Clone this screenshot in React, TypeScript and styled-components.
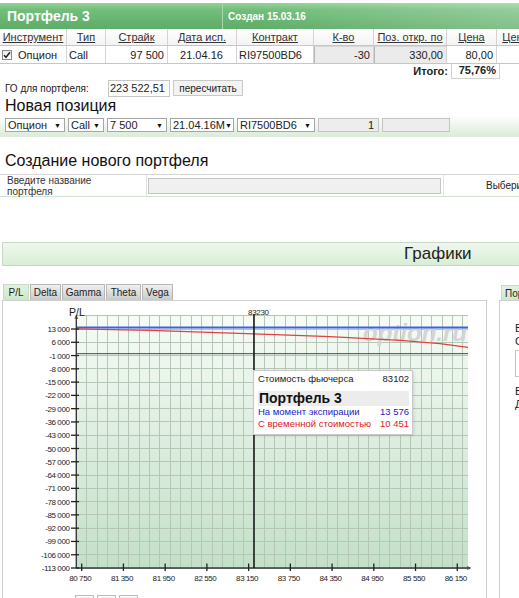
import React from "react";
import styled, { createGlobalStyle } from "styled-components";

const FONT = `"Liberation Sans", Arial, sans-serif`;

const GlobalStyle = createGlobalStyle`
  html, body { margin: 0; padding: 0; background: #fff; }
  body { font-family: ${FONT}; color: #222; width: 519px; height: 598px; overflow: hidden; }
  * { box-sizing: border-box; }
`;

const Page = styled.div`
  width: 560px;
  padding-top: 3px;
`;

/* ---------- header ---------- */
const Header = styled.div`
  display: flex;
  height: 26px;
  background: linear-gradient(to right, rgba(255, 255, 255, 0) 45%, rgba(255, 255, 255, 0.28) 100%),
    linear-gradient(to bottom, #95d399 0%, #72be7a 25%, #5eac67 100%);
`;
const HeaderTitle = styled.div`
  width: 223px;
  padding-left: 7px;
  display: flex;
  align-items: center;
  font-size: 14px;
  font-weight: bold;
  color: #fff;
  border-right: 1px solid #a8d8aa;
`;
const HeaderDate = styled.div`
  padding-left: 5px;
  display: flex;
  align-items: center;
  font-size: 10px;
  font-weight: bold;
  color: #fff;
`;

/* ---------- positions table ---------- */
const COLS = "67px 39px 62px 69px 77px 60px 73px 50px 60px";

const HeadRow = styled.div`
  display: grid;
  grid-template-columns: ${COLS};
  height: 17px;
  border-bottom: 1px solid #c6c6c6;
  background: linear-gradient(#ffffff, #f3f3f3);
`;
const HeadCell = styled.div`
  font-size: 11px;
  line-height: 16px;
  text-align: center;
  text-decoration: underline;
  color: #333;
  border-right: 1px solid #d4d4d4;
  white-space: nowrap;
  overflow: hidden;
`;
const DataRow = styled.div`
  display: grid;
  grid-template-columns: ${COLS};
  height: 18px;
  border-bottom: 1px solid #c6c6c6;
`;
const DataCell = styled.div<{ $align?: string; $shaded?: boolean }>`
  display: flex;
  align-items: center;
  justify-content: ${(p) => (p.$align === "right" ? "flex-end" : p.$align === "center" ? "center" : "flex-start")};
  gap: 6px;
  font-size: 11px;
  padding: 0 3px 0 2px;
  color: #222;
  white-space: nowrap;
  overflow: hidden;
  border-right: 1px solid #d4d4d4;
  background: ${(p) => (p.$shaded ? "#ebebeb" : "transparent")};
  ${(p) => (p.$shaded ? "border-left: 1px solid #b5b5b5; border-top: 1px solid #d8d8d8;" : "")}
`;
const CheckBox = styled.span`
  width: 10px;
  height: 10px;
  border: 1px solid #8a8a8a;
  background: linear-gradient(#e9e9e9, #fff);
  display: inline-flex;
  align-items: center;
  justify-content: center;
`;
const TotalRow = styled.div`
  display: grid;
  grid-template-columns: 449px 51px;
  height: 15px;
`;
const TotalLabel = styled.div`
  text-align: right;
  font-size: 11px;
  font-weight: bold;
  line-height: 14px;
  padding-right: 1px;
`;
const TotalValue = styled.div`
  margin-left: 2px;
  border: 1px solid #d0d0d0;
  border-top: none;
  font-size: 11px;
  font-weight: bold;
  text-align: right;
  line-height: 13px;
  padding-right: 3px;
`;

/* ---------- margin row ---------- */
const GoRow = styled.div`
  display: flex;
  align-items: center;
  height: 18px;
  padding-left: 5px;
`;
const GoLabel = styled.span`
  width: 103px;
  font-size: 10px;
  color: #222;
`;
const GoInput = styled.div`
  width: 62px;
  height: 17px;
  border: 1px solid #c6c6c6;
  font-size: 11px;
  line-height: 15px;
  text-align: right;
  padding-right: 4px;
`;
const Button = styled.button`
  margin-left: 3px;
  width: 70px;
  height: 16px;
  padding: 0;
  border: 1px solid #c9c9c9;
  background: #f3f3f3;
  font-family: ${FONT};
  font-size: 10px;
  color: #222;
`;

const SectionTitle = styled.h2<{ $mt: number }>`
  margin: ${(p) => p.$mt}px 0 0 5px;
  height: 18px;
  font-size: 16px;
  line-height: 18px;
  font-weight: normal;
  color: #111;
  white-space: nowrap;
`;

/* ---------- new position band ---------- */
const SelectBand = styled.div`
  display: flex;
  gap: 3px;
  height: 22px;
  padding: 3px 0 0 5px;
  background: linear-gradient(#ffffff 0%, #f1f7f0 40%, #dbebd8 100%);
`;
const FakeSelect = styled.div<{ $w: number }>`
  width: ${(p) => p.$w}px;
  height: 14px;
  border: 1px solid #a6a6a6;
  background: #fff;
  display: flex;
  align-items: center;
  justify-content: space-between;
  padding: 0 3px 0 2px;
  font-size: 11px;
  white-space: nowrap;
  overflow: hidden;
`;
const Arrow = styled.span`
  font-size: 7px;
  color: #111;
`;
const FakeField = styled.div<{ $w: number }>`
  width: ${(p) => p.$w}px;
  height: 14px;
  border: 1px solid #c4c4c4;
  background: #ededed;
  font-size: 11px;
  line-height: 12px;
  text-align: right;
  padding-right: 4px;
`;

/* ---------- create portfolio ---------- */
const CreateRow = styled.div`
  display: flex;
  height: 23px;
  margin-top: 4px;
  border-top: 1px solid #d6d6d6;
  border-bottom: 1px solid #d2e4cf;
`;
const CreateLabel = styled.div`
  width: 147px;
  padding: 1px 0 0 7px;
  font-size: 10px;
  line-height: 10.5px;
  color: #333;
  border-right: 1px solid #e2e2e2;
`;
const CreateInput = styled.div`
  width: 293px;
  height: 16px;
  margin: 3px 2px 0 1px;
  background: #f0f0f0;
  border: 1px solid #c6c6c6;
`;
const CreateAction = styled.div`
  flex: 1;
  padding: 5px 0 0 42px;
  font-size: 10px;
  color: #222;
  white-space: nowrap;
  border-left: 1px solid #e2e2e2;
`;

/* ---------- charts ---------- */
const ChartsBar = styled.div`
  margin: 45px 0 0 2px;
  height: 24px;
  border: 1px solid #c7d8c5;
  background: linear-gradient(#eff8ee, #d8edd5);
  font-size: 17px;
  line-height: 22px;
  padding-left: 401px;
  color: #222;
`;
const ChartsArea = styled.div`
  display: flex;
  margin-top: 18px;
`;
const LeftCol = styled.div`
  width: 485px;
  margin-left: 2px;
`;
const TabRow = styled.div`
  display: flex;
  gap: 1px;
  height: 16px;
  margin-left: 1px;
`;
const Tab = styled.div<{ $w: number; $active?: boolean }>`
  width: ${(p) => p.$w}px;
  font-size: 10px;
  line-height: 15px;
  text-align: center;
  color: #222;
  border: 1px solid ${(p) => (p.$active ? "#c5dcc3" : "#b7b7b7")};
  border-bottom: none;
  background: ${(p) => (p.$active ? "linear-gradient(#e3f2e1, #cde7ca)" : "linear-gradient(#f1f1f1, #c9c9c9)")};
`;
const ChartBox = styled.div`
  position: relative;
  height: 310px;
  border: 1px solid #cfcfcf;
`;
const ChartSvg = styled.svg`
  display: block;
`;
const MiniButtons = styled.div`
  display: flex;
  gap: 3px;
  margin: 5px 0 0 72px;
`;
const MiniButton = styled.div`
  width: 19px;
  height: 14px;
  border: 1px solid #bcbcbc;
  background: linear-gradient(#fafafa, #e4e4e4);
`;

const Tooltip = styled.div`
  position: absolute;
  left: 250px;
  top: 69px;
  width: 160px;
  height: 65px;
  padding: 1px 3px 0 4px;
  background: rgba(255, 255, 255, 0.96);
  border: 1px solid #cacaca;
  box-shadow: 1px 1px 3px rgba(0, 0, 0, 0.12);
  font-size: 9.5px;
`;
const TipRow = styled.div<{ $color?: string; $h?: number }>`
  display: flex;
  justify-content: space-between;
  line-height: ${(p) => p.$h ?? 12}px;
  color: ${(p) => p.$color ?? "#222"};
  white-space: nowrap;
`;
const TipTitle = styled.div`
  margin-top: 5px;
  height: 15px;
  padding-left: 1px;
  background: #ececec;
  font-size: 14px;
  line-height: 15px;
  font-weight: bold;
  color: #111;
`;

const RightCol = styled.div`
  flex: 1;
  margin-left: 12px;
  white-space: nowrap;
`;
const RightTab = styled.div`
  margin: 1px 0 0 2px;
  height: 15px;
  width: 60px;
  padding-left: 3px;
  font-size: 10px;
  line-height: 15px;
  border: 1px solid #c5dcc3;
  border-bottom: none;
  background: linear-gradient(#e3f2e1, #cde7ca);
`;
const RightBox = styled.div`
  height: 320px;
  border: 1px solid #cfcfcf;
  padding: 21px 0 0 15px;
  font-size: 11px;
`;
const RightLine = styled.div<{ $mt?: number }>`
  line-height: 13px;
  margin-top: ${(p) => p.$mt ?? 0}px;
`;
const RightInput = styled.div`
  margin-top: 2px;
  height: 27px;
  border: 1px solid #c6c6c6;
`;

/* ---------- chart data ---------- */
const yOf = (v: number) => 329 + ((13000 - v) / 7000) * 13.278;
const yTicks = Array.from({ length: 19 }, (_, i) => 13000 - i * 7000);
const fmt = (v: number) => {
  const s = Math.abs(v).toString().replace(/\B(?=(\d{3})+(?!\d))/g, " ");
  return (v < 0 ? "-" : "") + s;
};
const xLabels = ["80 750", "81 350", "81 950", "82 550", "83 150", "83 750", "84 350", "84 950", "85 550", "86 150"];
const xOf = (i: number) => 81.7 + i * 41.73;
const vGrid: number[] = [];
for (let x = 76.3 + 10.45; x < 468; x += 10.45) vGrid.push(x);

const PLOT_L = 76.3;
const PLOT_R = 468;
const PLOT_T = 315.7;
const PLOT_B = 568;

function Chart() {
  return (
    <ChartSvg width={483} height={289} viewBox="0 0 483 289">
      <defs>
        <linearGradient id="plotBg" x1="0" y1="0" x2="0" y2="1">
          <stop offset="0%" stopColor="#f6fbf6" />
          <stop offset="100%" stopColor="#c3e0c8" />
        </linearGradient>
      </defs>
      <g transform="translate(-3 -301)" fontFamily={FONT}>
        <rect x={PLOT_L} y={PLOT_T} width={PLOT_R - PLOT_L} height={PLOT_B - PLOT_T} fill="url(#plotBg)" />
        <g stroke="#b6c6b6" strokeWidth={1} shapeRendering="crispEdges">
          <line x1={PLOT_L} x2={PLOT_R} y1={PLOT_T} y2={PLOT_T} />
          {yTicks.map((v) => (
            <line key={v} x1={PLOT_L} x2={PLOT_R} y1={yOf(v)} y2={yOf(v)} />
          ))}
          {vGrid.map((x) => (
            <line key={x} x1={x} x2={x} y1={PLOT_T} y2={PLOT_B} />
          ))}
        </g>
        <text x={363} y={341} fontSize={24} fontWeight="bold" fontStyle="italic" fill="#d4d4d4">
          option.ru
        </text>
        <line x1={PLOT_L} x2={PLOT_R} y1={yOf(0)} y2={yOf(0)} stroke="#4a4a4a" strokeWidth={1} />
        <line x1={PLOT_L} x2={PLOT_R} y1={327.6} y2={327.6} stroke="#3d62e4" strokeWidth={2} />
        <polyline
          points="76,328.8 150,330.4 254,333.8 330,336.6 400,340.4 440,343.6 468,347.4"
          fill="none"
          stroke="#e2403f"
          strokeWidth={1.3}
        />
        {/* axes */}
        <line x1={PLOT_L} x2={PLOT_L} y1={PLOT_T} y2={PLOT_B} stroke="#3a3a3a" strokeWidth={1.4} />
        <line x1={PLOT_L} x2={PLOT_R + 2} y1={PLOT_B} y2={PLOT_B} stroke="#3a3a3a" strokeWidth={1.4} />
        <path d="M74.8 319 L76.3 315.5 L77.8 319" fill="none" stroke="#3a3a3a" strokeWidth={0.8} />
        <path d="M467 566.5 L470.5 568 L467 569.5" fill="none" stroke="#3a3a3a" strokeWidth={0.8} />
        <text x={69} y={315.5} fontSize={10.5} fill="#222">
          P/L
        </text>
        {yTicks.map((v) => (
          <g key={v}>
            <line x1={71} x2={79} y1={yOf(v)} y2={yOf(v)} stroke="#222" strokeWidth={1.3} />
            <text x={69.5} y={yOf(v) + 3} fontSize={8} letterSpacing={-0.4} textAnchor="end" fill="#222">
              {fmt(v)}
            </text>
          </g>
        ))}
        {xLabels.map((l, i) => (
          <g key={l}>
            <line x1={xOf(i)} x2={xOf(i)} y1={563.5} y2={571} stroke="#222" strokeWidth={1.3} />
            <text x={xOf(i) - 1.5} y={581} fontSize={8} letterSpacing={-0.4} textAnchor="middle" fill="#222">
              {l}
            </text>
          </g>
        ))}
        {/* cursor */}
        <line x1={254} x2={254} y1={314} y2={PLOT_B} stroke="#111" strokeWidth={1.5} />
        <text x={248} y={315} fontSize={8} letterSpacing={-0.3} fill="#222">
          83230
        </text>
      </g>
    </ChartSvg>
  );
}

const CheckIcon = () => (
  <svg width="8" height="8" viewBox="0 0 8 8">
    <path d="M1 4.2 L3 6.3 L7 1.3" fill="none" stroke="#222" strokeWidth="1.5" />
  </svg>
);

export default function App() {
  return (
    <>
      <GlobalStyle />
      <Page>
        <Header>
          <HeaderTitle>Портфель 3</HeaderTitle>
          <HeaderDate>Создан 15.03.16</HeaderDate>
        </Header>

        <HeadRow>
          <HeadCell>Инструмент</HeadCell>
          <HeadCell>Тип</HeadCell>
          <HeadCell>Страйк</HeadCell>
          <HeadCell>Дата исп.</HeadCell>
          <HeadCell>Контракт</HeadCell>
          <HeadCell>К-во</HeadCell>
          <HeadCell>Поз. откр. по</HeadCell>
          <HeadCell>Цена</HeadCell>
          <HeadCell>Цена тек.</HeadCell>
        </HeadRow>
        <DataRow>
          <DataCell>
            <CheckBox>
              <CheckIcon />
            </CheckBox>
            Опцион
          </DataCell>
          <DataCell>Call</DataCell>
          <DataCell $align="right">97 500</DataCell>
          <DataCell $align="center">21.04.16</DataCell>
          <DataCell>RI97500BD6</DataCell>
          <DataCell $align="right" $shaded>
            -30
          </DataCell>
          <DataCell $align="right" $shaded>
            330,00
          </DataCell>
          <DataCell $align="right">80,00</DataCell>
          <DataCell />
        </DataRow>
        <TotalRow>
          <TotalLabel>Итого:</TotalLabel>
          <TotalValue>75,76%</TotalValue>
        </TotalRow>

        <GoRow>
          <GoLabel>ГО для портфеля:</GoLabel>
          <GoInput>223 522,51</GoInput>
          <Button>пересчитать</Button>
        </GoRow>

        <SectionTitle $mt={0}>Новая позиция</SectionTitle>
        <SelectBand>
          <FakeSelect $w={60}>
            Опцион <Arrow>▼</Arrow>
          </FakeSelect>
          <FakeSelect $w={36}>
            Call <Arrow>▼</Arrow>
          </FakeSelect>
          <FakeSelect $w={60}>
            7 500 <Arrow>▼</Arrow>
          </FakeSelect>
          <FakeSelect $w={64}>
            21.04.16M <Arrow>▼</Arrow>
          </FakeSelect>
          <FakeSelect $w={78}>
            RI7500BD6 <Arrow>▼</Arrow>
          </FakeSelect>
          <FakeField $w={61}>1</FakeField>
          <FakeField $w={68} />
        </SelectBand>

        <SectionTitle $mt={15}>Создание нового портфеля</SectionTitle>
        <CreateRow>
          <CreateLabel>
            Введите название
            <br />
            портфеля
          </CreateLabel>
          <CreateInput />
          <CreateAction>Выберите</CreateAction>
        </CreateRow>

        <ChartsBar>Графики</ChartsBar>

        <ChartsArea>
          <LeftCol>
            <TabRow>
              <Tab $w={26} $active>
                P/L
              </Tab>
              <Tab $w={31}>Delta</Tab>
              <Tab $w={43}>Gamma</Tab>
              <Tab $w={35}>Theta</Tab>
              <Tab $w={31}>Vega</Tab>
            </TabRow>
            <ChartBox>
              <Chart />
              <MiniButtons>
                <MiniButton />
                <MiniButton />
                <MiniButton />
              </MiniButtons>
              <Tooltip>
                <TipRow $h={14}>
                  <span>Стоимость фьючерса</span>
                  <span>83102</span>
                </TipRow>
                <TipTitle>Портфель 3</TipTitle>
                <TipRow $color="#1c22c8">
                  <span>На момент экспирации</span>
                  <span>13 576</span>
                </TipRow>
                <TipRow $color="#e0161e">
                  <span>С временной стоимостью</span>
                  <span>10 451</span>
                </TipRow>
              </Tooltip>
            </ChartBox>
          </LeftCol>
          <RightCol>
            <RightTab>Портфель</RightTab>
            <RightBox>
              <RightLine>Выбранный портфель</RightLine>
              <RightLine>Состав</RightLine>
              <RightInput />
              <RightLine $mt={8}>Выбор даты</RightLine>
              <RightLine>Дата экспирации</RightLine>
            </RightBox>
          </RightCol>
        </ChartsArea>
      </Page>
    </>
  );
}
